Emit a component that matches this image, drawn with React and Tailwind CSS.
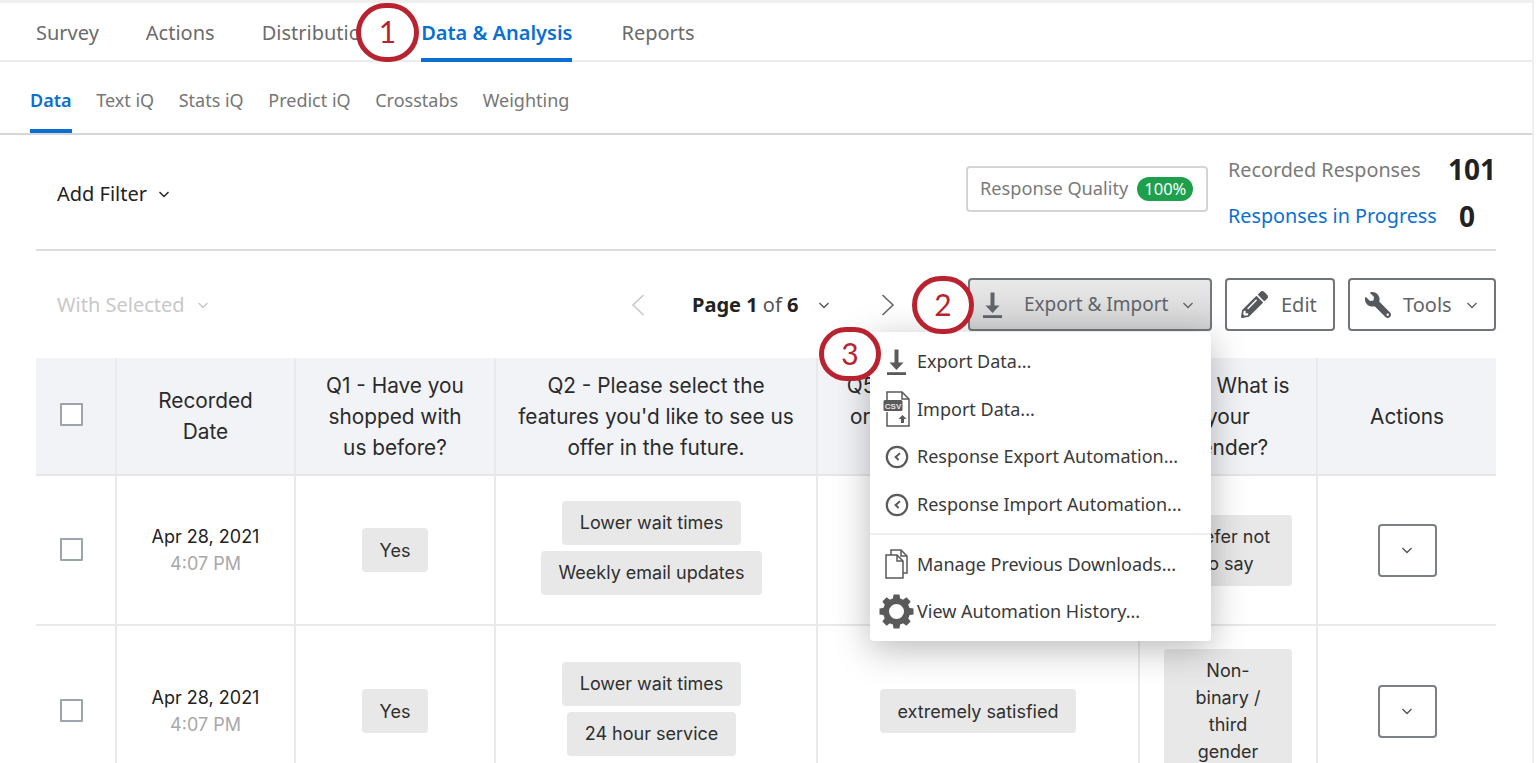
import React from "react";
import { FaPencilAlt, FaWrench } from "react-icons/fa";

const ui = "font-['Noto_Sans','Open_Sans',sans-serif]";
const tbl = "font-['Inter','Noto_Sans',sans-serif]";

const mainTabs = ["Survey", "Actions", "Distribution", "Data & Analysis", "Reports"];
const subTabs = ["Data", "Text iQ", "Stats iQ", "Predict iQ", "Crosstabs", "Weighting"];

const cols = "grid grid-cols-[79px_179px_200px_322px_322px_178px_180px]";

function Chevron({ className = "", size = 12 }) {
  return (
    <svg width={size} height={size} viewBox="0 0 12 12" fill="none" stroke="currentColor" strokeWidth="1.4" className={className}>
      <path d="M1.5 4l4.5 4.5L10.5 4" />
    </svg>
  );
}

function Pager({ left, className = "" }) {
  return (
    <svg width="14" height="24" viewBox="0 0 14 24" fill="none" stroke="currentColor" strokeWidth="1.6" className={className}>
      <path d={left ? "M12.5 2L2 12l10.5 10" : "M1.5 2L12 12 1.5 22"} />
    </svg>
  );
}

function DownloadIcon({ className = "" }) {
  return (
    <svg width="19" height="26" viewBox="0 0 19 26" fill="currentColor" className={className}>
      <path d="M7.5 0.5h4v13h5L9.5 21 2.5 13.500h5z" />
      <rect x="0" y="23.200" width="19" height="2.800" />
    </svg>
  );
}

function CsvIcon() {
  return (
    <svg width="28" height="38" viewBox="0 0 28 38" fill="none">
      <path d="M4 13V2h15l7 7v27H4V22" stroke="#5a5a5a" strokeWidth="1.5" />
      <path d="M19 2v7h7" stroke="#5a5a5a" strokeWidth="1.5" />
      <rect x="0.5" y="10" width="19" height="11" rx="1.500" fill="#5a5a5a" />
      <text x="10" y="18.600" textAnchor="middle" fontSize="8" fontFamily="Liberation Sans" fontWeight="700" fill="#e4e4e4">CSV</text>
      <path d="M18 33v-4h-2.500l4-4 4 4H21v4z" fill="#5a5a5a" />
    </svg>
  );
}

function ClockIcon() {
  return (
    <svg width="24" height="24" viewBox="0 0 24 24" fill="none" stroke="#5a5a5a">
      <circle cx="12" cy="12" r="10.200" strokeWidth="2.200" />
      <path d="M15 8.200L10.600 12l3 3" strokeWidth="2" />
    </svg>
  );
}

function CopyIcon() {
  return (
    <svg width="24" height="30" viewBox="0 0 24 30" fill="none" stroke="#5a5a5a" strokeWidth="1.5">
      <path d="M6 6V1h10l6 6v17h-4" />
      <path d="M16 1v6h6" />
      <path d="M1 6h11l6 6v17H1z" fill="#fff" />
      <path d="M12 6v6h6" />
    </svg>
  );
}

function GearIcon() {
  return (
    <svg width="37" height="37" viewBox="0 0 37 37" fill="none" stroke="#5a5a5a">
      <circle cx="18.500" cy="18.500" r="10.500" strokeWidth="6" />
      {[0, 45, 90, 135, 180, 225, 270, 315].map((a) => (
        <path key={a} d="M15.500 1.500h6l1 7h-8z" fill="#5a5a5a" stroke="none" transform={`rotate(${a} 18.500 18.500)`} />
      ))}
    </svg>
  );
}

function Callout({ n, className }) {
  return (
    <div className={"absolute flex items-center justify-center rounded-full border-[5px] border-[#b9232f] bg-white pb-[3px] text-[30px] leading-none text-[#b9232f] font-['Lato',sans-serif] " + className}>
      {n}
    </div>
  );
}

function Chip({ children, className = "" }) {
  return <div className={"rounded bg-[#e8e8e8] px-[18px] py-[8.5px] text-center text-[18px] leading-[27px] text-[#2f2f2f] " + className}>{children}</div>;
}

function Cell({ children, first, className = "" }) {
  return (
    <div className={"flex flex-col items-center justify-center " + (first ? "" : "border-l-2 border-[#e9e9e9] ") + className}>
      {children}
    </div>
  );
}

function Checkbox({ className = "" }) {
  return <div className={"h-[23px] w-[23px] rounded-[1px] border-2 border-[#9ca4ad] bg-white " + className} />;
}

function RowCells({ features, satisfied, gender, height }) {
  return (
    <div className={cols + " border-b-2 border-[#e9e9e9] " + height}>
      <Cell first className="pb-[2px] pr-[9px]"><Checkbox /></Cell>
      <Cell>
        <div className="text-center text-[18px] leading-[27px] text-[#222]">
          Apr 28, 2021
          <div className="text-[#a8a8a8]">4:07 PM</div>
        </div>
      </Cell>
      <Cell><Chip>Yes</Chip></Cell>
      <Cell className="gap-[6px] pb-[5px] pr-[9px]">
        {features.map((f) => <Chip key={f}>{f}</Chip>)}
      </Cell>
      <Cell><Chip className="px-[17px]">{satisfied}</Chip></Cell>
      <Cell><Chip className="w-[128px] px-3">{gender}</Chip></Cell>
      <Cell>
        <button className="flex h-[53px] w-[59px] items-center justify-center rounded border-2 border-[#7b8087] text-[#555]">
          <Chevron />
        </button>
      </Cell>
    </div>
  );
}

function MenuItem({ icon, children }) {
  return (
    <div className="flex h-[47.6px] items-center text-[18px] text-[#3a3a3a]">
      <div className="flex w-[47px] shrink-0 items-center justify-center pl-[6px]">{icon}</div>
      <span>{children}</span>
    </div>
  );
}

export default function App() {
  return (
    <div className={"relative h-[763px] w-[1536px] overflow-hidden bg-white " + ui}>
      <div className="h-[763px] w-[1534px] overflow-hidden border-r-2 border-t-[3px] border-[#efefef]">
        {/* main tabs */}
        <div className="flex h-[59px] gap-[47px] border-b-2 border-[#ececec] pl-9 text-[20px] text-[#6b6b6b]">
          {mainTabs.map((t) => (
            <div
              key={t}
              className={"flex h-[59px] items-center border-b-[4px] pt-[5px] " + (t === "Data & Analysis" ? "ml-px mr-[2px] border-[#0b6fd1] font-semibold text-[#0b6fd1]" : "border-transparent")}
            >
              {t}
            </div>
          ))}
        </div>

        {/* sub tabs */}
        <div className="flex h-[73px] gap-[24.6px] border-b-2 border-[#d6d6d6] pl-[30px] text-[18px] text-[#767676]">
          {subTabs.map((t) => (
            <div
              key={t}
              className={"flex h-[71px] items-center border-b-[4px] pt-[9px] " + (t === "Data" ? "border-[#0b6fd1] font-semibold text-[#0b6fd1]" : "border-transparent")}
            >
              {t}
            </div>
          ))}
        </div>

        <div className="px-9">
          {/* filter row */}
          <div className="flex h-[116px] items-start justify-between border-b-2 border-[#dcdcdc] pt-[16px]">
            <div className="mt-[25px] flex items-center gap-[11px] pl-[21px] text-[20px] leading-[36px] text-[#222]">
              Add Filter <Chevron />
            </div>
            <div className="flex items-start gap-5">
              <div className="mt-[15px] flex h-[46px] w-[242px] items-center gap-[9px] rounded border-2 border-[#d4d4d4] pl-[12px] text-[18.2px] text-[#7a7a7a]">
                Response Quality
                <span className="rounded-full bg-[#1d9f4b] px-[7px] text-[16.5px] leading-[24px] text-white">100%</span>
              </div>
              <div className="w-[268px] text-[19.8px]">
                <div className="flex h-[38px] items-center justify-between text-[#7a7a7a]">
                  Recorded Responses
                  <span className="-mt-[3px] text-[28px] font-bold text-[#222]">101</span>
                </div>
                <div className="mt-2 flex h-[38px] items-center justify-between pr-[21px] text-[#0b6fd1]">
                  Responses in Progress
                  <span className="-mt-[1px] text-[28px] font-bold text-[#222]">0</span>
                </div>
              </div>
            </div>
          </div>

          {/* toolbar */}
          <div className="mt-[27px] flex h-[53px] items-center">
            <div className="flex w-[595px] items-center gap-3 pl-[21px] text-[20px] text-[#c8c8c8]">
              With Selected <Chevron />
            </div>
            <Pager left className="text-[#c8c8c8]" />
            <div className="ml-[47px] text-[20px] text-[#555]">
              <span className="font-bold text-[#222]">Page 1</span> of <span className="font-bold text-[#222]">6</span>
            </div>
            <Chevron className="ml-[20px] text-[#555]" />
            <Pager className="ml-[51px] text-[#666]" />
            <div className="ml-auto flex h-[53px] gap-[13px] text-[20px] text-[#5f6368]">
              <button className="flex w-[244px] items-center rounded border-2 border-[#72777d] bg-gradient-to-b from-[#e9e9e9] to-[#d3d3d3] pl-[13px] text-[19px] text-[#60646a]">
                <DownloadIcon />
                <span className="ml-[22px]">Export &amp; Import</span>
                <Chevron className="ml-[14px]" />
              </button>
              <button className="flex w-[110px] items-center rounded border-2 border-[#6f757b] pl-[14px]">
                <FaPencilAlt size={27} className="text-[#55585c]" />
                <span className="ml-[13px]">Edit</span>
              </button>
              <button className="flex w-[148px] items-center rounded border-2 border-[#6f757b] pl-[15px]">
                <FaWrench size={26} className="-scale-x-100 text-[#55585c]" />
                <span className="ml-[12px]">Tools</span>
                <Chevron className="ml-[14px]" />
              </button>
            </div>
          </div>

          {/* table */}
          <div className={"mt-[27px] " + tbl}>
            <div className={cols + " h-[118px] border-b-2 border-[#e6e6e8] bg-[#f2f3f7] text-center text-[20.8px] leading-[31px] text-[#2a2a2a]"}>
              <Cell first className="pr-[9px]"><Checkbox className="mb-[4px]" /></Cell>
              <Cell>Recorded<br />Date</Cell>
              <Cell>Q1 - Have you<br />shopped with<br />us before?</Cell>
              <Cell>Q2 - Please select the<br />features you'd like to see us<br />offer in the future.</Cell>
              <Cell>Q5 - How satisfied are you<br />or our quality of services?<br />today?</Cell>
              <Cell>Q6 - What is<br />your<br />gender?</Cell>
              <Cell>Actions</Cell>
            </div>
            <RowCells
              height="h-[150px]"
              features={["Lower wait times", "Weekly email updates"]}
              satisfied="moderately satisfied"
              gender={<>Prefer not<br />to say</>}
            />
            <RowCells
              height="h-[172px]"
              features={["Lower wait times", "24 hour service"]}
              satisfied="extremely satisfied"
              gender={<>Non-<br />binary /<br />third<br />gender</>}
            />
          </div>
        </div>
      </div>

      {/* export menu */}
      <div className="absolute left-[870px] top-[332px] h-[309px] w-[341px] rounded bg-white pt-[6px] shadow-[0_8px_36px_rgba(0,0,0,0.28)]">
        <MenuItem icon={<DownloadIcon className="text-[#5a5a5a]" />}>Export Data...</MenuItem>
        <MenuItem icon={<CsvIcon />}>Import Data...</MenuItem>
        <MenuItem icon={<ClockIcon />}>Response Export Automation...</MenuItem>
        <MenuItem icon={<ClockIcon />}>Response Import Automation...</MenuItem>
        <div className="my-[5px] border-t-2 border-[#eeeeee]" />
        <MenuItem icon={<CopyIcon />}>Manage Previous Downloads...</MenuItem>
        <MenuItem icon={<GearIcon />}>View Automation History...</MenuItem>
      </div>

      <Callout n="1" className="left-[356px] top-[3px] h-[59px] w-[63px]" />
      <Callout n="2" className="left-[912px] top-[276px] h-[58px] w-[62px]" />
      <Callout n="3" className="left-[819px] top-[327px] h-[54px] w-[62px]" />
    </div>
  );
}
